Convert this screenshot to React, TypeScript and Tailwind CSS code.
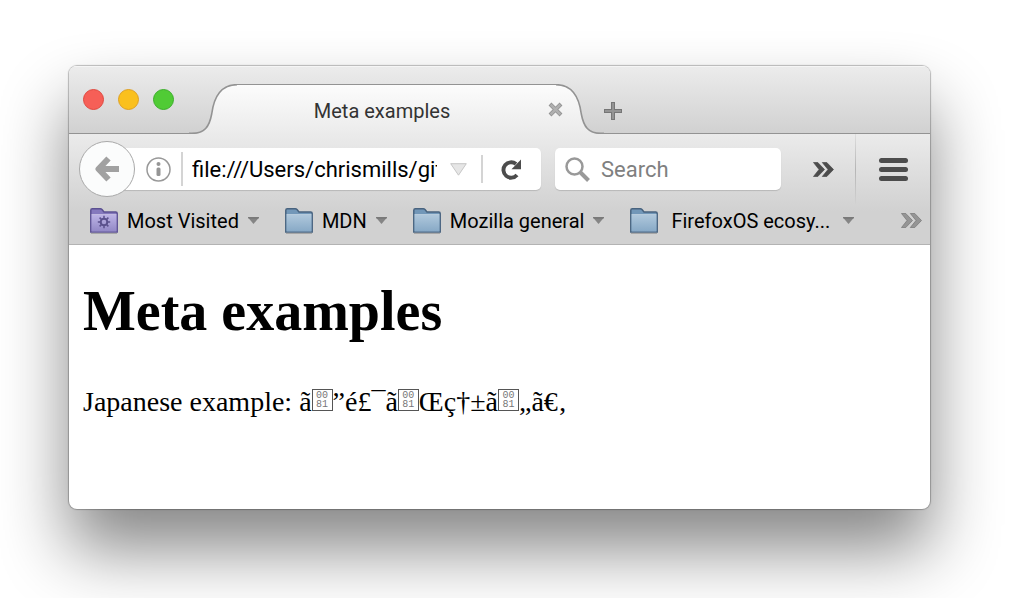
import React from "react";

function TabEdge({ id, flip = false }: { id: string; flip?: boolean }) {
  return (
    <svg width="48" height="50" viewBox="0 0 48 50" className={flip ? "shrink-0 -scale-x-100" : "shrink-0"} aria-hidden="true">
      <defs>
        <linearGradient id={id} x1="0" y1="0" x2="0" y2="1">
          <stop offset="0" stopColor="#fcfcfc" />
          <stop offset="1" stopColor="#ebebeb" />
        </linearGradient>
      </defs>
      <path d="M3 50C16 49 20.500 43 22.700 30C25 12 33 .7 48 .7V50Z" fill={`url(#${id})`} />
      <path d="M0 49.300H3C15.500 49.300 20.300 43 22.700 30C25 12 33 .7 48 .7" fill="none" stroke="#939393" strokeWidth="1.600" />
    </svg>
  );
}

function Folder({ smart = false }: { smart?: boolean }) {
  const id = smart ? "folder-smart" : "folder-plain";
  const line = smart ? "#5c5192" : "#48637f";
  return (
    <svg width="28" height="26" viewBox="0 0 28 26" className="shrink-0" aria-hidden="true">
      <defs>
        <linearGradient id={id} x1="0" y1="0" x2="0" y2="1">
          <stop offset="0" stopColor={smart ? "#bdb4e6" : "#b0c8dc"} />
          <stop offset="1" stopColor={smart ? "#9288c6" : "#87a9c6"} />
        </linearGradient>
      </defs>
      <path d="M1 25.500H27" stroke="#000" strokeOpacity=".2" />
      <path d="M.8 24V2.300Q.8.8 2.300.8H10.300Q11.300.8 12 1.600L14 4H25.700Q27.200 4 27.200 5.500V24Z" fill={smart ? "#8579bd" : "#7297b8"} stroke={line} strokeWidth="1.500" />
      <path d="M1.500 6.500H26.500V23.500H1.500Z" fill={`url(#${id})`} />
      <path d="M1.500 6.500H26.500" stroke="#fff" strokeOpacity=".35" />
      {smart && (
        <g stroke="#5b518d" fill="none">
          <circle cx="14" cy="14" r="3.300" strokeWidth="2" />
          <path strokeWidth="1.500" d="M14 7.800v2.500M14 17.700v2.500M7.800 14h2.500M17.700 14h2.500M9.600 9.600l1.800 1.800M16.600 16.600l1.800 1.800M18.400 9.600l-1.800 1.800M11.400 16.600l-1.800 1.800" />
        </g>
      )}
    </svg>
  );
}

function Caret() {
  return (
    <svg width="11" height="8" viewBox="0 0 11 8" className="shrink-0" aria-hidden="true">
      <path d="M0 .5H11L5.500 7Z" fill="#858585" />
      <path d="M0 .8H11" stroke="#666" />
    </svg>
  );
}

function DoubleChevron({ light = false }: { light?: boolean }) {
  return (
    <svg width="21" height="15" viewBox="0 0 21 15" fill={light ? "#959595" : "#4c4c4c"} stroke={light ? "#757575" : "#4c4c4c"} strokeWidth=".7" aria-hidden="true">
      <path d="M.5.5H4.800L11.500 7.500L4.800 14.500H.5L6 7.500Z" />
      <path d="M9.300.5H13.800L20.500 7.500L13.800 14.500H9.300L15 7.500Z" />
    </svg>
  );
}

function Bookmark({ label, smart, gap = "gap-[9px]" }: { label: string; smart?: boolean; gap?: string }) {
  return (
    <button className={`flex shrink-0 items-center ${gap}`}>
      <Folder smart={smart} />
      <span>{label}</span>
      <Caret />
    </button>
  );
}

function HexBox() {
  return (
    <span className="inline-block h-[22px] w-[21px] overflow-hidden border border-[#555] pt-px text-center font-['Liberation_Mono',monospace] text-[10px] leading-[9px] text-[#777]">
      00
      <br />
      81
    </span>
  );
}

export default function App() {
  return (
    <div className="bg-white pt-[66px] pr-[89px] pb-[89px] pl-[69px] font-['Roboto',sans-serif] text-xl text-black">
      <div className="overflow-hidden rounded-lg bg-white shadow-[0_0_1px_1px_rgba(0,0,0,0.25),0_40px_68px_rgba(0,0,0,0.48)]">
        <header className="flex h-[68px] items-end border-b border-[#939393] bg-linear-to-b from-[#ececec] to-[#d1d1d1] shadow-[inset_0_1px_0_#f5f5f5]">
          <div className="flex shrink-0 gap-[14px] self-start pt-[23px] pl-[14px]">
            <button aria-label="Close" className="size-[21px] rounded-full border border-[#e0483e] bg-[#f65f57]" />
            <button aria-label="Minimize" className="size-[21px] rounded-full border border-[#dfa023] bg-[#fac01e]" />
            <button aria-label="Zoom" className="size-[21px] rounded-full border border-[#3bae2a] bg-[#50cb35]" />
          </div>
          <div className="relative -mb-px ml-[15px] h-[50px] w-[415px]">
            <div className="absolute inset-0 flex">
              <TabEdge id="tab-left" />
              <div className="flex-1 border-t border-[#939393] bg-linear-to-b from-[#fcfcfc] to-[#ebebeb]" />
              <TabEdge id="tab-right" flip />
            </div>
            <div className="relative flex h-full items-center pt-1 pr-[41px] pl-[38px]">
              <button className="flex-1 pr-[11px] text-center text-[#333]">Meta examples</button>
              <button aria-label="Close tab" className="pb-1">
                <svg width="15" height="15" viewBox="0 0 15 15" aria-hidden="true">
                  <path d="M2 2L13 13M13 2L2 13" stroke="#949494" strokeWidth="4" />
                  <path d="M2.700 2.700L12.300 12.300M12.300 2.700L2.700 12.300" stroke="#b0b0b0" strokeWidth="2.400" />
                </svg>
              </button>
            </div>
          </div>
          <button aria-label="New tab" className="pb-[13px]">
            <svg width="18" height="18" viewBox="0 0 18 18" aria-hidden="true">
              <path d="M9 0V18M0 9H18" stroke="#767676" strokeWidth="4" />
              <path d="M9 1V17M1 9H17" stroke="#949494" strokeWidth="2" />
            </svg>
          </button>
        </header>

        <nav className="border-b border-[#b3b3b3] bg-linear-to-b from-[#ebebeb] to-[#d1d1d1] to-70%">
          <div className="flex h-[70px] items-center pl-[10px]">
            <button aria-label="Back" className="z-10 flex size-[56px] shrink-0 items-center justify-center rounded-full border border-[#a9a9a9] bg-[#fbfcfc]">
              <svg width="26" height="28" viewBox="0 0 26 28" fill="none" stroke="#a1a1a1" strokeWidth="6" aria-hidden="true">
                <path d="M14.500 3.500L4.500 14L14.500 24.500M5 14H25" strokeLinejoin="round" />
              </svg>
            </button>
            <div className="-ml-7 flex h-[42px] min-w-0 flex-[395] items-center rounded-r-[5px] bg-white pl-[39px] shadow-[0_1px_1px_rgba(0,0,0,0.15)]">
              <button aria-label="Site information" className="shrink-0">
                <svg width="25" height="25" viewBox="0 0 25 25" aria-hidden="true">
                  <circle cx="12.500" cy="12.500" r="11.500" fill="none" stroke="#999" strokeWidth="1.500" />
                  <circle cx="12.500" cy="7" r="2" fill="#959595" />
                  <rect x="10.500" y="10.500" width="4" height="8.500" rx="1.500" fill="#959595" />
                </svg>
              </button>
              <div className="ml-[10px] h-[34px] w-0.5 shrink-0 bg-[#d4d4d4]" />
              <input aria-label="Address" defaultValue="file:///Users/chrismills/git" className="ml-[9px] w-0 min-w-0 flex-1 bg-transparent pt-0.5 text-[22px] outline-none" />
              <button aria-label="Show history" className="ml-[13px] shrink-0">
                <svg width="17" height="13" viewBox="0 0 17 13" aria-hidden="true">
                  <path d="M.7.7H16.300L8.500 12.200Z" fill="#e6e6e6" stroke="#c6c6c6" />
                </svg>
              </button>
              <div className="ml-[14px] h-[28px] w-0.5 shrink-0 bg-[#d4d4d4]" />
              <button aria-label="Reload" className="mr-[19px] ml-[18px] shrink-0">
                <svg width="21" height="21" viewBox="0 0 21 21" aria-hidden="true">
                  <path d="M15 5A7.700 7.700 0 1 0 16 16" fill="none" stroke="#4c4c4c" strokeWidth="3.900" />
                  <path d="M20 .5V10.300H10.500Z" fill="#4c4c4c" />
                </svg>
              </button>
            </div>
            <div className="ml-[14px] flex h-[42px] min-w-0 flex-[216] items-center rounded-[5px] bg-white pl-[10px] shadow-[0_1px_1px_rgba(0,0,0,0.15)]">
              <svg width="25" height="25" viewBox="0 0 25 25" fill="none" stroke="#999" className="shrink-0" aria-hidden="true">
                <circle cx="9.500" cy="9.500" r="8" strokeWidth="2.500" />
                <path d="M15 15L23.500 23.500" strokeWidth="4" />
              </svg>
              <input aria-label="Search" placeholder="Search" className="ml-[11px] w-0 flex-1 bg-transparent pt-0.5 text-[22px] outline-none placeholder:text-[#808080]" />
            </div>
            <button aria-label="More tools" className="ml-[32px] shrink-0">
              <DoubleChevron />
            </button>
            <div className="ml-[21px] h-full w-px shrink-0 bg-linear-to-b from-[#dedede] via-[#b5b5b5] to-[#d1d1d1]" />
            <button aria-label="Open menu" className="mr-[22px] ml-[23px] flex shrink-0 flex-col gap-1">
              <span className="h-[5px] w-[29px] rounded-full bg-[#4c4c4c]" />
              <span className="h-[5px] w-[29px] rounded-full bg-[#4c4c4c]" />
              <span className="h-[5px] w-[29px] rounded-full bg-[#4c4c4c]" />
            </button>
          </div>
          <div className="flex h-[40px] items-center gap-[26px] pb-[7px] pl-[21px]">
            <Bookmark label="Most Visited" smart />
            <Bookmark label="MDN" />
            <Bookmark label="Mozilla general" />
            <Bookmark label="FirefoxOS ecosy..." gap="gap-[13px]" />
            <button aria-label="More bookmarks" className="mr-2 ml-auto">
              <DoubleChevron light />
            </button>
          </div>
        </nav>

        <main className="px-[14px] pt-[34px] pb-[90px] font-['Liberation_Serif',serif]">
          <h1 className="text-[56px] leading-[64px] font-bold">Meta examples</h1>
          <p className="mt-[42px] text-[28px] leading-[34px] whitespace-nowrap">
            Japanese example: ã<HexBox />”é£¯ã<HexBox />Œç†±ã<HexBox />„ã€‚
          </p>
        </main>
      </div>
    </div>
  );
}
